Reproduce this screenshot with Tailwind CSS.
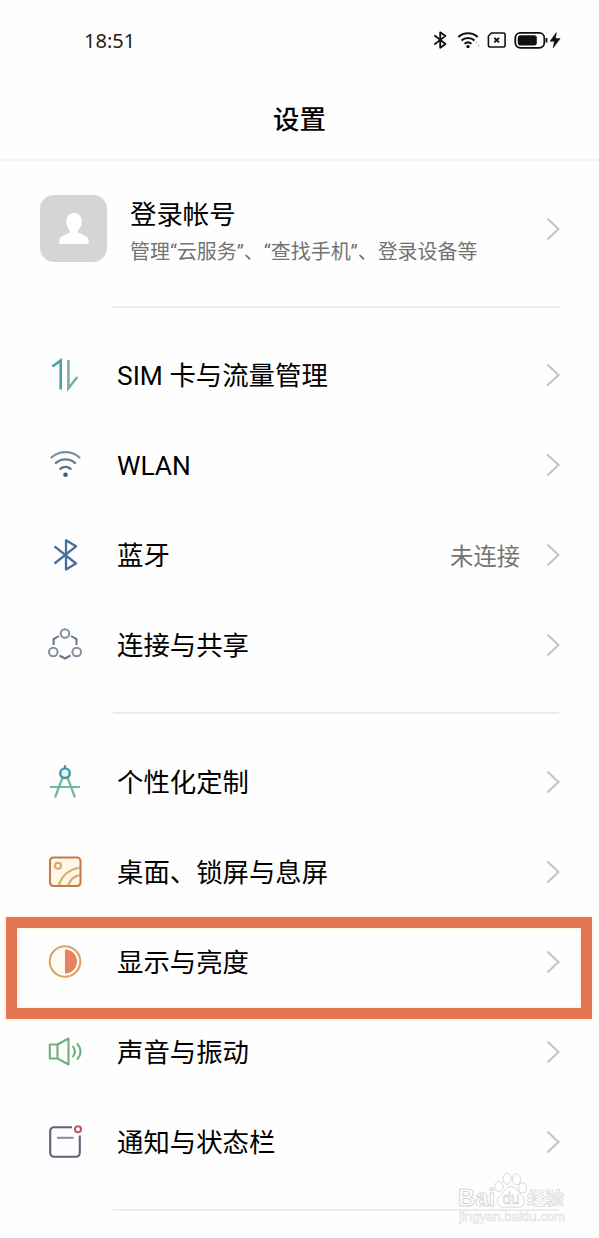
<!DOCTYPE html>
<html lang="zh-CN">
<head>
<meta charset="utf-8">
<title>设置</title>
<script src="https://cdn.jsdelivr.net/npm/@tailwindcss/browser@4"></script>
</head>
<body class="bg-[#fefefe]">
<svg width="0" height="0" class="absolute">
  <defs>
    <symbol id="chev" viewBox="0 0 14 24"><path d="M1.3 1.5 12.500 12 1.3 22.5" fill="none" stroke="#c4c4c4" stroke-width="2.100"/></symbol>
  </defs>
</svg>
<div class="relative flex h-[1238px] w-[599px] flex-col overflow-hidden bg-[#fefefe] font-['Roboto','Noto_Sans_CJK_SC',sans-serif] text-[26.4px] text-black">

  <header class="flex h-[80px] shrink-0 items-center justify-between pr-[37px] pl-[84px]">
    <span class="mt-[2px] font-['Noto_Sans',sans-serif] text-[20px] leading-none text-[#222]">18:51</span>
    <svg width="130" height="24" viewBox="0 0 130 24" fill="none" stroke="#111">
      <path d="M2.3 7.3 13.5 16 8.2 19.7V4.3l5.3 3.6L2.3 16.5" stroke-width="1.8" stroke-linejoin="round"/>
      <g stroke-width="2.1"><path d="M26.3 9a14.500 14.500 0 0 1 19.400 0M29.500 12.500a9.600 9.600 0 0 1 13 0M32.500 15.800a5.400 5.400 0 0 1 7 0"/></g>
      <circle cx="36" cy="18.600" r="1.700" fill="#111" stroke="none"/>
      <path d="M44.500 13v2.500M46.500 16.500v2.500" stroke="#ccc" stroke-width="1.500"/>
      <path d="M59.500 5H71.500a1.600 1.600 0 0 1 1.600 1.600V17.400a1.600 1.600 0 0 1-1.600 1.600H58a1.600 1.600 0 0 1-1.600-1.600V8z" stroke-width="1.600"/>
      <path d="m62.400 9.800 4.600 4.600m0-4.600-4.600 4.600" stroke-width="1.900"/>
      <rect x="83.300" y="4.800" width="29" height="15" rx="5" stroke-width="1.800"/>
      <rect x="85.800" y="7.200" width="19" height="10.200" rx="2.600" fill="#111" stroke="none"/>
      <path d="M114.500 10v4.500" stroke-width="1.800"/>
      <path d="M124.300 4.500 118 13.300h4.300l-1.100 6.600 7-9.300h-4.600z" fill="#111" stroke="#111" stroke-width=".5"/>
    </svg>
  </header>

  <div class="flex h-[81px] shrink-0 items-center justify-center border-b-2 border-[#f3f3f3] pt-[2px] font-medium">设置</div>

  <section class="flex h-[145px] shrink-0 items-start pt-[34px] pr-[39px] pl-[40px]">
    <div class="flex size-[67px] items-center justify-center rounded-[14px] bg-[#d5d5d5]">
      <svg width="30" height="34" viewBox="0 0 30 34" fill="#fff"><path d="M15 1c-5 0-7.800 3.700-7.800 8.600 0 3.600 1.400 6.500 3.300 8.400.9 1 .5 2.700-.8 3.300l-6.300 2.600C1.300 25 .3 26.500.3 28.500V32h29.400v-3.500c0-2-1-3.500-3.100-4.600l-6.300-2.600c-1.300-.6-1.700-2.300-.8-3.300 1.900-1.900 3.300-4.800 3.300-8.400C22.800 4.700 20 1 15 1z"/></svg>
    </div>
    <div class="ml-[23px] flex flex-1 flex-col">
      <span class="mt-[3px] leading-[34px]">登录帐号</span>
      <span class="mt-[6px] text-[19.95px] leading-[28px] text-[#737373]">管理“云服务”、“查找手机”、登录设备等</span>
    </div>
    <svg class="mt-[22px] h-[24px] w-[14px]"><use href="#chev"/></svg>
  </section>
  <div class="mr-[40px] ml-[113px] h-[2px] shrink-0 bg-[#ececec]"></div>

  <nav class="mt-[22px] flex flex-col">
    <div class="flex h-[90px] items-center pr-[39px] pl-[48px]">
      <svg width="34" height="34" viewBox="0 0 34 34" fill="none" stroke-width="2.600"><path d="M4.300 8.500 12.700 2.600V31.500" stroke="#45a59b"/><path d="M20.400 2v28.200L29.300 19" stroke="#78b695"/></svg>
      <span class="mt-[3px] ml-[35px] flex-1">SIM 卡与流量管理</span>
      <svg class="h-[24px] w-[14px]"><use href="#chev"/></svg>
    </div>
    <div class="flex h-[90px] items-center pr-[39px] pl-[48px]">
      <svg width="34" height="34" viewBox="0 0 34 34" fill="none" stroke-width="2.300" stroke-linecap="round"><path d="M3.500 9.500c7.800-7.100 20.200-7.100 28 0" stroke="#7890a0"/><path d="M7.800 15.100c5.400-4.900 14-4.900 19.400 0" stroke="#637f95"/><path d="M12.300 20.800c3-2.700 7.400-2.700 10.400 0" stroke="#557189"/><circle cx="17.500" cy="26.800" r="2.300" fill="#405c78" stroke="none"/></svg>
      <span class="mt-[3px] ml-[35px] flex-1">WLAN</span>
      <svg class="h-[24px] w-[14px]"><use href="#chev"/></svg>
    </div>
    <div class="flex h-[90px] items-center pr-[39px] pl-[48px]">
      <svg width="34" height="34" viewBox="0 0 34 34" fill="none" stroke="#466f9b" stroke-width="2.300" stroke-linejoin="round"><path d="M6.500 8.300 28 25.500 18 31.500V2.300l10 6L6.500 25.500"/></svg>
      <span class="mt-[4px] ml-[35px] flex-1">蓝牙</span>
      <span class="mt-[4px] mr-[26px] text-[23.300px] text-[#737373]">未连接</span>
      <svg class="h-[24px] w-[14px]"><use href="#chev"/></svg>
    </div>
    <div class="flex h-[90px] items-center pr-[39px] pl-[48px]">
      <svg width="34" height="34" viewBox="0 0 34 34" fill="none" stroke-width="2"><g stroke="#7f8fa3"><circle cx="17" cy="5.500" r="4.300"/><circle cx="5.300" cy="24" r="4.300"/><circle cx="28.700" cy="24" r="4.300"/></g><path d="M11 8 5.600 11.100V17M23 8l5.500 3.100V17M11.500 27.500l5.500 3 5.500-3" stroke="#6b7280"/></svg>
      <span class="mt-[4px] ml-[35px] flex-1">连接与共享</span>
      <svg class="h-[24px] w-[14px]"><use href="#chev"/></svg>
    </div>
  </nav>
  <div class="mt-[22px] mr-[40px] ml-[113px] h-[2px] shrink-0 bg-[#ececec]"></div>

  <nav class="mt-[23px] flex flex-col">
    <div class="flex h-[90px] items-center pr-[39px] pl-[48px]">
      <svg width="34" height="34" viewBox="0 0 34 34" fill="none" stroke-width="2.200"><path d="M2 22h30M14.500 12.500 7 32.500M19.500 12.500 27 32.500" stroke="#72b89b"/><path d="M17 .3v4" stroke="#4a8f98"/><circle cx="17" cy="8.200" r="4.800" stroke="#4593a1" stroke-width="2.400" fill="#d8f7f8"/></svg>
      <span class="mt-[4px] ml-[35px] flex-1">个性化定制</span>
      <svg class="h-[24px] w-[14px]"><use href="#chev"/></svg>
    </div>
    <div class="flex h-[90px] items-center pr-[39px] pl-[48px]">
      <svg width="34" height="34" viewBox="0 0 34 34" fill="none" stroke-width="2.100"><rect x="2" y="2.500" width="30.500" height="28.500" rx="3.500" stroke="#c17a50" fill="#fff6e6"/><g stroke="#d9ab68"><circle cx="10" cy="10.800" r="3"/><path d="M11 30.500C13.500 21 21 14 32 12.800M20 30.500c2-5.500 6.500-9.500 12-10.500"/></g></svg>
      <span class="mt-[4px] ml-[35px] flex-1">桌面、锁屏与息屏</span>
      <svg class="h-[24px] w-[14px]"><use href="#chev"/></svg>
    </div>
    <div class="flex h-[90px] items-center pr-[39px] pl-[48px]">
      <svg width="34" height="34" viewBox="0 0 34 34" fill="none"><circle cx="17" cy="16.500" r="15.300" stroke="#d6a568" stroke-width="2.100" fill="#fffaf0"/><path d="M17 4.500a12 12 0 0 1 0 24z" fill="#e68260"/></svg>
      <span class="mt-[4px] ml-[35px] flex-1">显示与亮度</span>
      <svg class="h-[24px] w-[14px]"><use href="#chev"/></svg>
    </div>
    <div class="flex h-[90px] items-center pr-[39px] pl-[48px]">
      <svg width="34" height="34" viewBox="0 0 34 34" fill="none" stroke="#72ad7b" stroke-width="2.100" stroke-linejoin="round"><path d="M9.500 9.500 20.500 3.500V29.500L9.500 23.500H1.800V9.500zM9.500 9.500v14"/><path d="M25 11.500c2.200 3 2.200 7 0 10M29.500 9c4 4.500 4 10.500 0 15" stroke-linecap="round"/></svg>
      <span class="mt-[4px] ml-[35px] flex-1">声音与振动</span>
      <svg class="h-[24px] w-[14px]"><use href="#chev"/></svg>
    </div>
    <div class="flex h-[90px] items-center pr-[39px] pl-[48px]">
      <svg width="34" height="34" viewBox="0 0 34 34" fill="none" stroke="#5a6578" stroke-width="2.100"><path d="M24 2.200H6a3.800 3.800 0 0 0-3.800 3.800V28a3.800 3.800 0 0 0 3.800 3.800H28a3.800 3.800 0 0 0 3.800-3.800V10.500"/><path d="M9 12.800h16.500" stroke="#8791a3"/><circle cx="30" cy="4.200" r="3" stroke="#c4545e"/></svg>
      <span class="mt-[4px] ml-[35px] flex-1">通知与状态栏</span>
      <svg class="h-[24px] w-[14px]"><use href="#chev"/></svg>
    </div>
  </nav>
  <div class="mt-[22px] mr-[40px] ml-[113px] h-[2px] shrink-0 bg-[#ececec]"></div>

  <div class="absolute top-[917px] left-[6px] h-[102px] w-[586px] border-[11px] border-[#e57550] shadow-[0_0_3px_1px_#fff0d8,inset_0_0_3px_1px_#fff0d8]"></div>

  <svg class="absolute top-[1168px] left-[455px]" width="116" height="60" viewBox="0 0 116 60" fill="#fff" stroke="#d6d6d6" stroke-width="1">
    <g font-family="Liberation Sans, sans-serif">
      <text x="3" y="38" font-size="24" font-weight="bold" textLength="37" lengthAdjust="spacingAndGlyphs">Bai</text>
      <ellipse cx="44" cy="18.500" rx="4" ry="5.300"/><ellipse cx="52" cy="10.800" rx="4" ry="5.500"/><ellipse cx="61.500" cy="11.300" rx="4" ry="5.500"/><ellipse cx="67.500" cy="20" rx="4" ry="5.300"/>
      <path d="M56 18.500c4.500 0 6.500 4.500 9.500 8 3.500 3.500 5 6 3.500 9.500-2 4.500-8 3-13 3s-11 1.500-13-3c-1.500-3.500 0-6 3.500-9.500C49.500 23 51.500 18.500 56 18.500z"/>
      <text x="47.500" y="36" font-size="16" stroke-width=".8" textLength="17" lengthAdjust="spacingAndGlyphs">du</text>
      <text x="4" y="53" font-size="13" stroke="#e6e6e6" stroke-width=".8" textLength="106" lengthAdjust="spacingAndGlyphs">jingyan.baidu.com</text>
    </g>
    <text x="72" y="37" font-family="Noto Sans CJK SC, sans-serif" font-size="18.500" font-weight="bold" stroke-width=".7">经验</text>
  </svg>
</div>
</body>
</html>
